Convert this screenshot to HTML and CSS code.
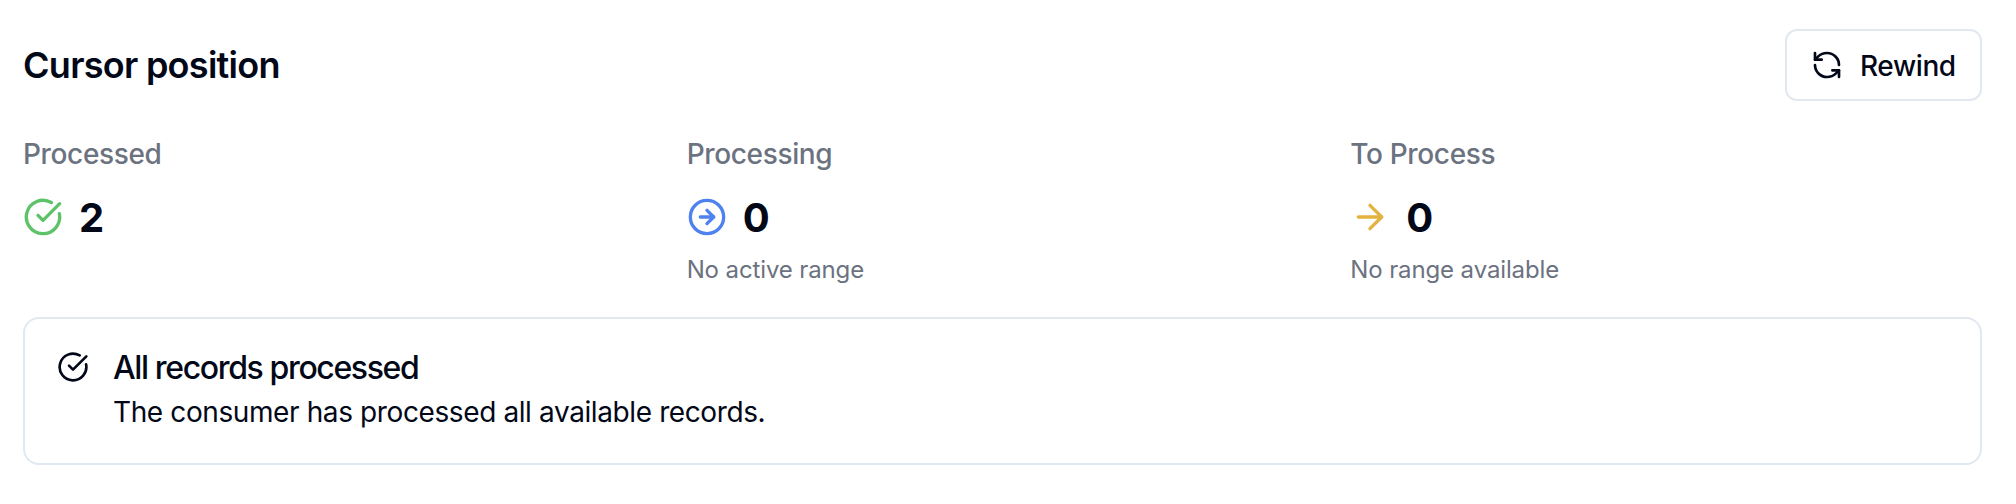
FILE: index.html
```html
<!DOCTYPE html>
<html lang="en">
<head>
<meta charset="utf-8">
<title>Cursor position</title>
<link rel="stylesheet" href="styles.css">
</head>
<body>
<main class="panel">
  <header class="header">
    <h2 class="title">Cursor position</h2>
    <button class="button" type="button">
      <svg class="icon icon-md" viewBox="0 0 24 24"><path d="M21 12a9 9 0 0 0-9-9 9.75 9.75 0 0 0-6.74 2.74L3 8"/><path d="M3 3v5h5"/><path d="M3 12a9 9 0 0 0 9 9 9.75 9.75 0 0 0 6.74-2.74L21 16"/><path d="M16 16h5v5"/></svg>
      <span class="button-text">Rewind</span>
    </button>
  </header>
  <section class="stats">
    <div class="stat">
      <div class="label">Processed</div>
      <div class="value">
        <svg class="icon icon-lg green" viewBox="0 0 24 24"><path d="M21.801 10A10 10 0 1 1 17 3.335"/><path d="m9 11 3 3L22 4"/></svg>
        <span class="number">2</span>
      </div>
    </div>
    <div class="stat">
      <div class="label">Processing</div>
      <div class="value">
        <svg class="icon icon-lg blue" viewBox="0 0 24 24"><circle cx="12" cy="12" r="10"/><path d="M8 12h8"/><path d="m12 16 4-4-4-4"/></svg>
        <span class="number">0</span>
      </div>
      <div class="note">No active range</div>
    </div>
    <div class="stat">
      <div class="label">To Process</div>
      <div class="value">
        <svg class="icon icon-lg yellow" viewBox="0 0 24 24"><path d="M5 12h14"/><path d="m12 5 7 7-7 7"/></svg>
        <span class="number">0</span>
      </div>
      <div class="note">No range available</div>
    </div>
  </section>
  <section class="alert" role="alert">
    <svg class="icon icon-md" viewBox="0 0 24 24"><path d="M21.801 10A10 10 0 1 1 17 3.335"/><path d="m9 11 3 3L22 4"/></svg>
    <div>
      <h5 class="alert-title">All records processed</h5>
      <p class="alert-text">The consumer has processed all available records.</p>
    </div>
  </section>
</main>
</body>
</html>
```
FILE: styles.css
```css
* { box-sizing: border-box; margin: 0; }
body {
  background: #fff;
  color: #020817;
  font-family: Inter, sans-serif;
}
.panel {
  display: flex;
  flex-direction: column;
  gap: 32px;
  padding: 29px 34px 0 23px;
}
.header { display: flex; align-items: center; justify-content: space-between; height: 72px; }
.title { font-size: 36px; font-weight: 600; line-height: 56px; letter-spacing: -0.72px; }
.button {
  display: flex;
  align-items: center;
  gap: 16px;
  width: 197px;
  height: 72px;
  padding: 0 24px;
  border: 2px solid #e2e8f0;
  border-radius: 12px;
  background: #fff;
  color: inherit;
  font: 500 28px/40px Inter, sans-serif;
  letter-spacing: -0.4px;
}
.button-text { padding: 1px 0 0 1px; }
.icon { flex: none; fill: none; stroke: currentColor; stroke-width: 2; stroke-linecap: round; stroke-linejoin: round; }
.icon-md { width: 32px; height: 32px; }
.icon-lg { width: 40px; height: 40px; }
.green { color: #5ec269; }
.blue { color: #4f82f0; }
.yellow { color: #e3b341; }
.stats { display: grid; grid-template-columns: repeat(3, 1fr); gap: 32px; height: 152px; }
.label { padding-top: 1px; color: #6b7280; font-size: 28px; font-weight: 500; line-height: 40px; letter-spacing: -0.35px; }
.value { display: flex; align-items: center; gap: 16px; height: 56px; margin-top: 15px; font-size: 40px; font-weight: 700; letter-spacing: -0.5px; }
.number { padding-top: 2px; line-height: 54px; }
.note { margin-top: 9px; color: #6b7280; font-size: 24px; line-height: 32px; letter-spacing: -0.12px; }
.alert { display: flex; gap: 24px; height: 148px; padding: 32px; border: 2px solid #e2e8f0; border-radius: 16px; }
.alert-title { font-size: 32px; font-weight: 500; line-height: 34px; letter-spacing: -1.37px; }
.alert-text { margin-top: 4px; font-size: 28px; line-height: 46px; letter-spacing: -0.39px; }
```
